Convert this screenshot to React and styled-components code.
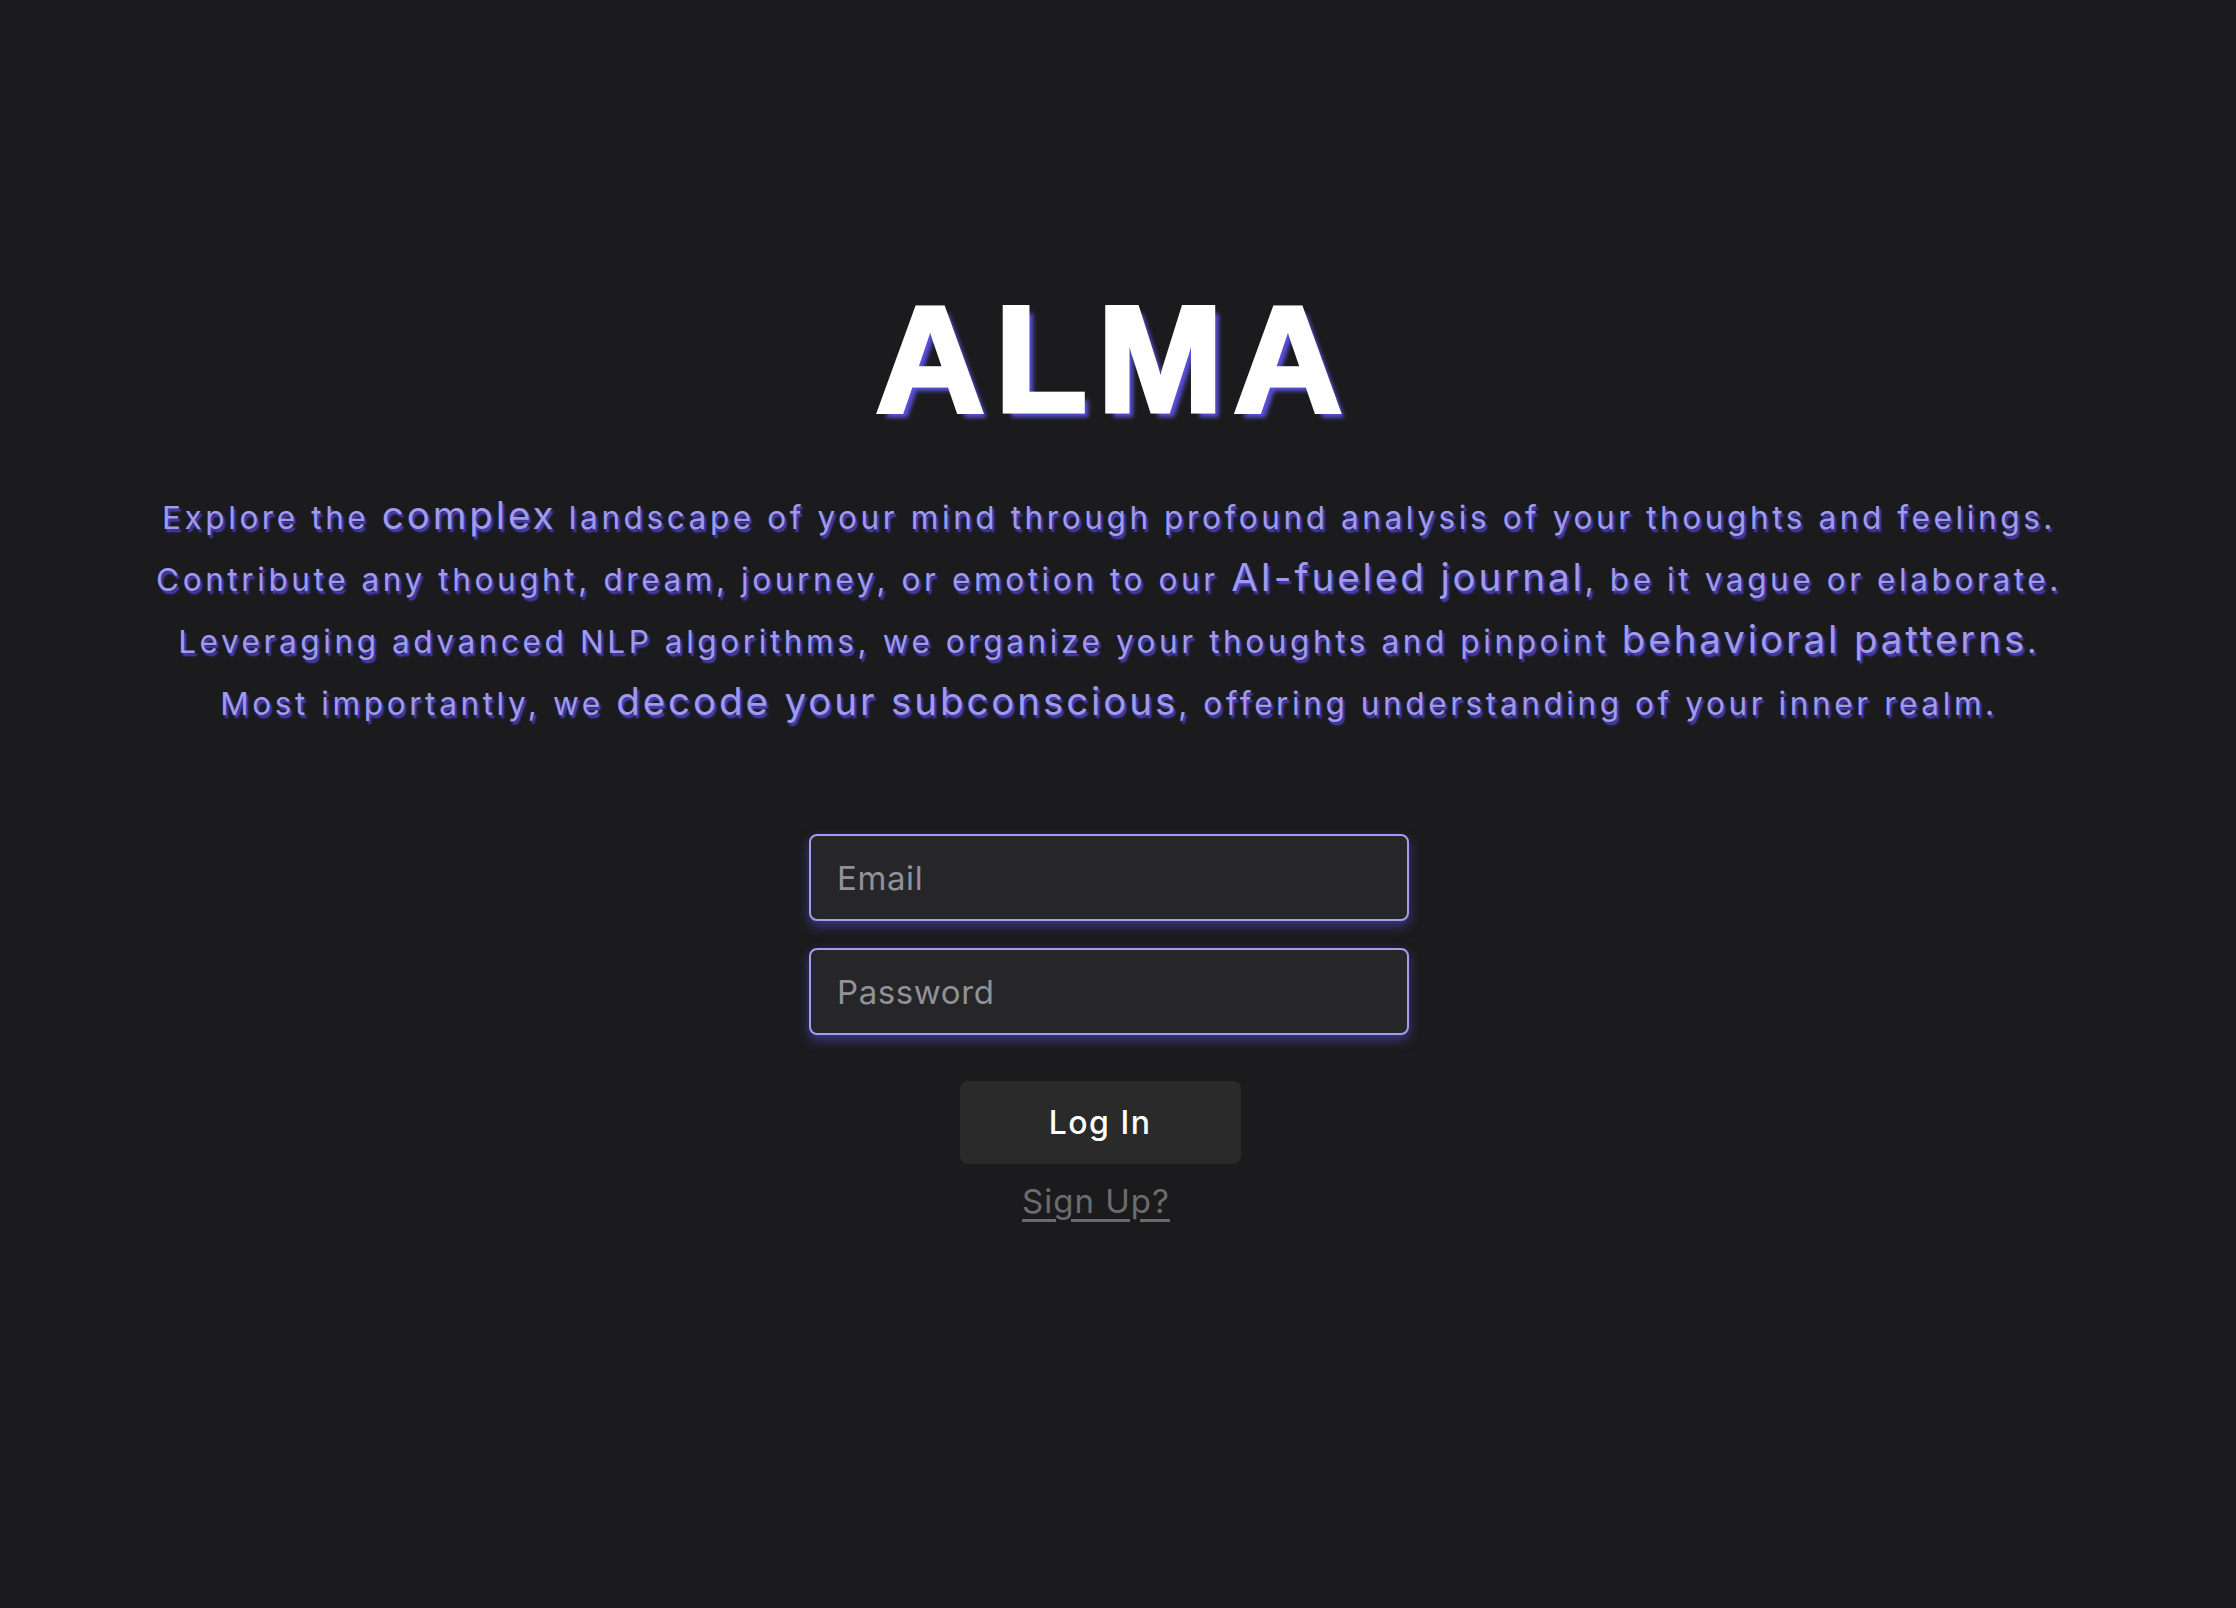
import React from "react";
import styled, { createGlobalStyle } from "styled-components";

const Global = createGlobalStyle`
  html, body { margin: 0; padding: 0; background: #1b1b1d; }
  body { font-family: Inter, "Noto Sans", sans-serif; }
`;

const Page = styled.main`
  width: calc(100% - 18px);
  min-height: 1608px;
  display: flex;
  flex-direction: column;
  align-items: center;
  padding-top: 284px;
  box-sizing: border-box;
`;

const Title = styled.h1`
  margin: 0;
  font-family: "Liberation Sans", Arial, sans-serif;
  font-weight: 700;
  font-size: 150px;
  line-height: 150px;
  letter-spacing: 11px;
  padding-left: 11px;
  color: #ffffff;
  -webkit-text-stroke: 5px #ffffff;
  text-shadow: 6px 6px 4px #5a52e0;
`;

const Intro = styled.p`
  margin: 53px 0 0;
  text-align: center;
  font-family: Inter, "Noto Sans", sans-serif;
  font-size: 31.5px;
  line-height: 62px;
  letter-spacing: 3.6px;
  color: #a09ae9;
  text-shadow: 2px 3px 2px #4a40c8;
  white-space: nowrap;
`;

const Big = styled.span`
  font-size: 38.5px;
  line-height: 1;
  letter-spacing: 2.9px;
`;

const Form = styled.form`
  margin-top: 99px;
  display: flex;
  flex-direction: column;
  align-items: center;
  gap: 27px;
`;

const Input = styled.input`
  width: 600px;
  height: 87px;
  box-sizing: border-box;
  padding: 0 26px;
  background: #262628;
  border: 2px solid #a59cf0;
  border-radius: 8px;
  box-shadow: 0 5px 12px rgba(88, 78, 220, 0.55);
  color: #e6e6e6;
  font-family: Inter, "Noto Sans", sans-serif;
  font-size: 33px;
  letter-spacing: 0.6px;
  outline: none;
  &::placeholder { color: #8f9299; }
`;

const Button = styled.button`
  margin-top: 19px;
  margin-right: 18px;
  width: 281px;
  height: 83px;
  background: #2a2a2b;
  border: none;
  border-radius: 8px;
  color: #ffffff;
  font-family: Inter, "Noto Sans", sans-serif;
  font-size: 32px;
  font-weight: 500;
  letter-spacing: 1.5px;
  cursor: pointer;
`;

const SignUp = styled.a`
  margin-top: -10px;
  margin-right: 26px;
  color: #6c6c6e;
  font-family: Inter, "Noto Sans", sans-serif;
  font-size: 33px;
  letter-spacing: 1px;
  text-decoration: underline;
  text-underline-offset: 6px;
  cursor: pointer;
`;

export default function App() {
  return (
    <>
      <Global />
      <Page>
        <Title>ALMA</Title>
        <Intro>
          Explore the <Big>complex</Big> landscape of your mind through profound analysis of your thoughts and feelings.
          <br />
          Contribute any thought, dream, journey, or emotion to our <Big>AI-fueled journal</Big>, be it vague or elaborate.
          <br />
          Leveraging advanced NLP algorithms, we organize your thoughts and pinpoint <Big>behavioral patterns</Big>.
          <br />
          Most importantly, we <Big>decode your subconscious</Big>, offering understanding of your inner realm.
        </Intro>
        <Form onSubmit={(e) => e.preventDefault()}>
          <Input type="email" placeholder="Email" />
          <Input type="password" placeholder="Password" />
          <Button type="submit">Log In</Button>
          <SignUp>Sign Up?</SignUp>
        </Form>
      </Page>
    </>
  );
}
